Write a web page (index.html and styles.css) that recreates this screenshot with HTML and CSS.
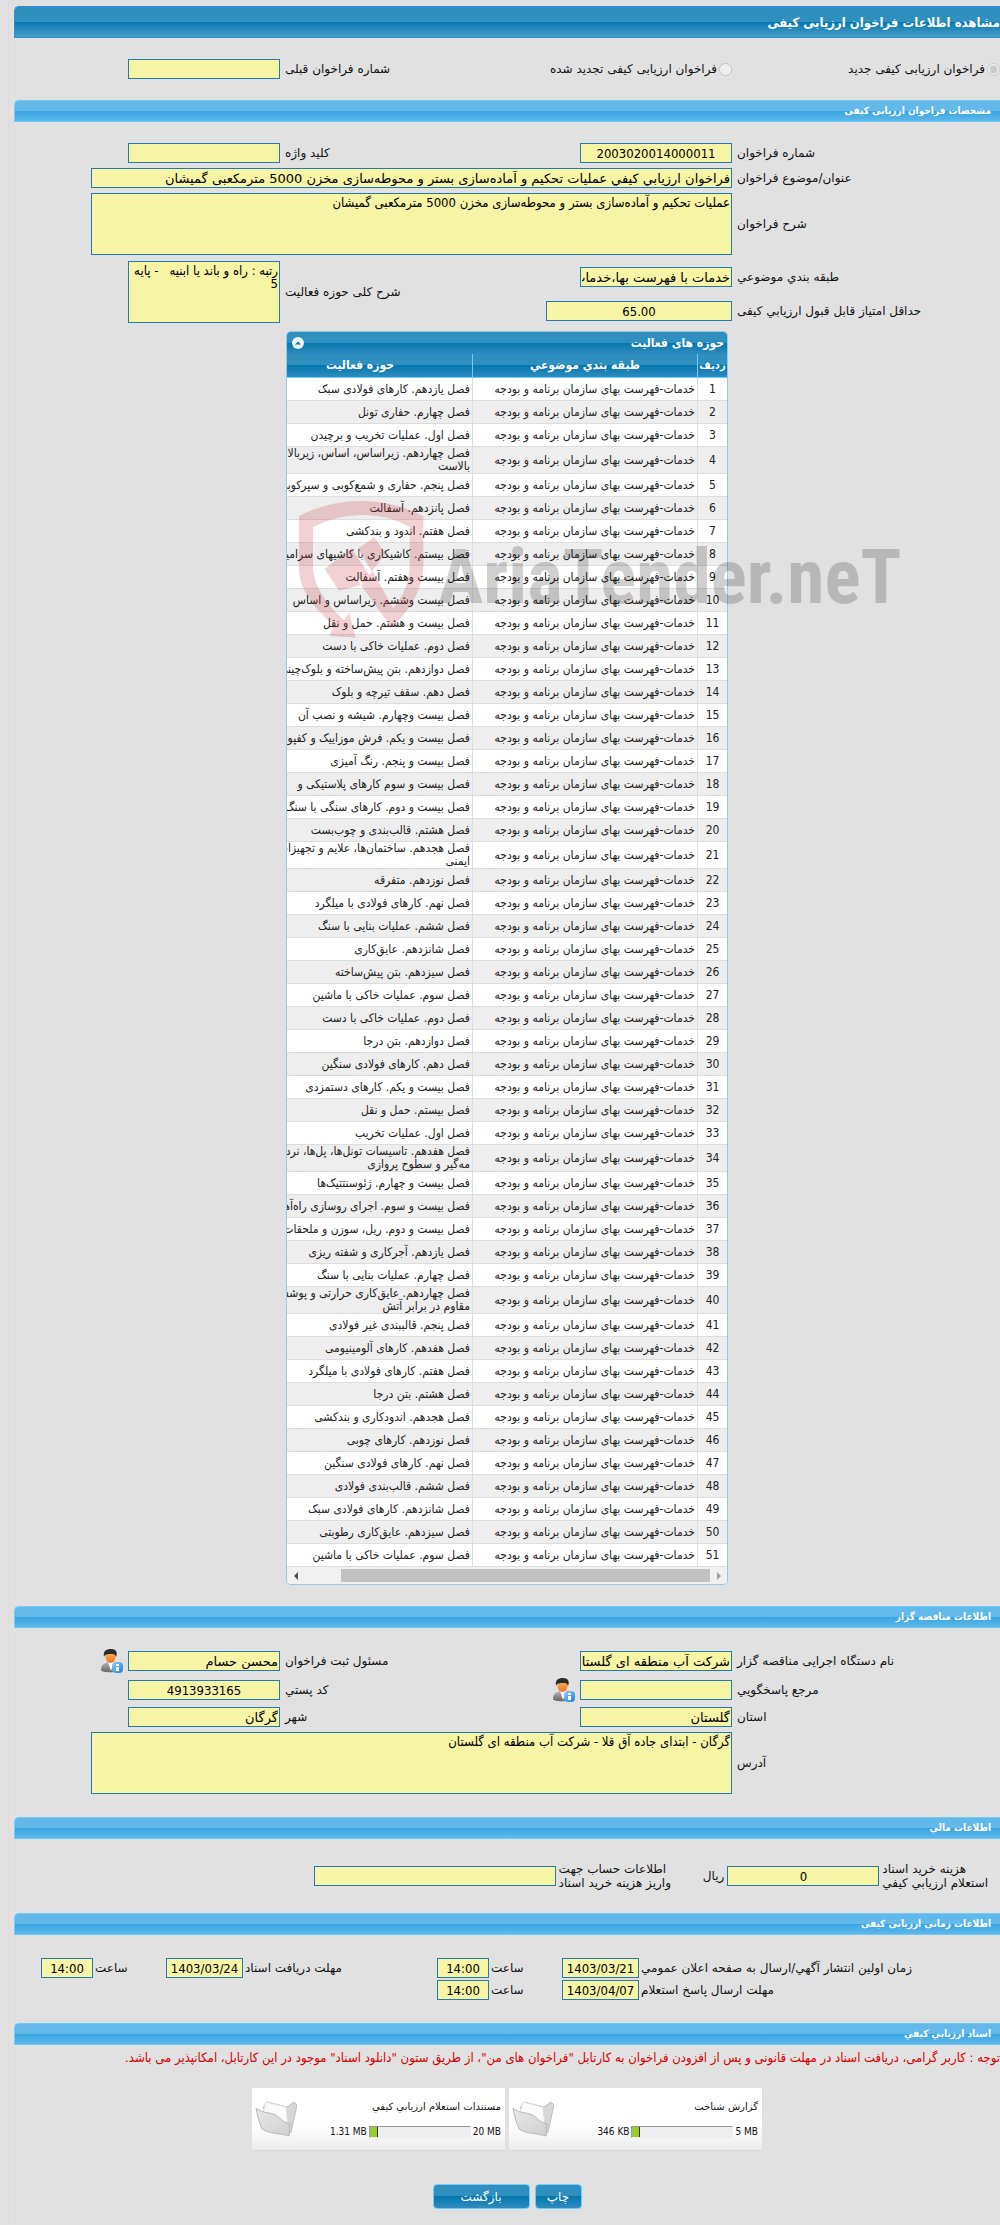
FILE: index.html
```
<!DOCTYPE html>
<html lang="fa" dir="rtl">
<head>
<meta charset="utf-8">
<title>مشاهده اطلاعات فراخوان ارزیابی کیفی</title>
<link rel="stylesheet" href="styles.css">
</head>
<body>
<svg class="defs" aria-hidden="true">
  <defs>
    <linearGradient id="suit" x1="0" y1="0" x2="0" y2="1"><stop offset="0" stop-color="#b5b5b5"/><stop offset="1" stop-color="#666"/></linearGradient>
    <linearGradient id="skin" x1="0" y1="0" x2="0" y2="1"><stop offset="0" stop-color="#ffb765"/><stop offset="1" stop-color="#e8771f"/></linearGradient>
    <linearGradient id="info" x1="0" y1="0" x2="1" y2="1"><stop offset="0" stop-color="#8fd0fa"/><stop offset="1" stop-color="#1c7fd6"/></linearGradient>
    <linearGradient id="flap" x1="0" y1="0" x2="1" y2="1"><stop offset="0" stop-color="#e9e9e9"/><stop offset="1" stop-color="#cfcfcf"/></linearGradient>
    <symbol id="person" viewBox="0 0 22 24">
      <path d="M0 21C0 16 3 14 8 13h3c5 1 7 3 7 8 0 3-18 3-18 0z" fill="url(#suit)"/>
      <path d="M7 13l3 9 3-9z" fill="#fff"/>
      <ellipse cx="9.500" cy="8" rx="5" ry="6" fill="url(#skin)"/>
      <path d="M3 8C2 2 5 0 10 0s7 3 5 8c-1-3-2-3-5-3-3 0-6 0-7 3z" fill="#2b2b2b"/>
      <rect x="11" y="13" width="11" height="11" rx="4" fill="url(#info)"/>
      <path d="M15 15h3v2h-3zM15 18h3v4h-3z" fill="#fff"/>
    </symbol>
    <symbol id="folder" viewBox="0 0 42 38">
      <path d="M8 8l4-6 20 5 7-5 3 3-6 27-6 3z" fill="#d6d6d6" stroke="#bdbdbd"/>
      <path d="M8 12l3-10 20 5 2 20-6 5z" fill="#fbfbfb" stroke="#ddd"/>
      <path d="M1 8c6 5 10 4 17 6 7 2 8 8 17 10l-1 12C24 33 15 34 7 29 4 22 2 14 1 8z" fill="url(#flap)" stroke="#b8b8b8"/>
    </symbol>
  </defs>
</svg>
<main class="panel">
  <h1 class="title">مشاهده اطلاعات فراخوان ارزیابی کیفی</h1>

  <section class="form form-type">
    <label class="choice"><input type="radio" name="kind" checked disabled><span>فراخوان ارزیابی کیفی جدید</span></label>
    <label class="choice"><input type="radio" name="kind" disabled><span>فراخوان ارزیابی کیفی تجدید شده</span></label>
    <label class="lbl" for="prev">شماره فراخوان قبلی</label><input class="field" id="prev" readonly>
  </section>

  <h2 class="bar">مشخصات فراخوان ارزیابی کیفی</h2>
  <section class="form form-call">
    <label class="lbl" for="num">شماره فراخوان</label><input class="field num" id="num" value="2003020014000011" readonly>
    <label class="lbl" for="key">کلید واژه</label><input class="field" id="key" readonly><span></span>
    <label class="lbl" for="subject">عنوان/موضوع فراخوان</label><input class="field wide" id="subject" value="فراخوان ارزیابي کیفي عملیات تحکیم و آماده‌سازی بستر و محوطه‌سازی مخزن 5000 مترمکعبی گمیشان" readonly>
    <label class="lbl" for="desc">شرح فراخوان</label><textarea class="field wide" id="desc" readonly>عملیات تحکیم و آماده‌سازی بستر و محوطه‌سازی مخزن 5000 مترمکعبی گمیشان</textarea>
    <label class="lbl" for="cat">طبقه بندي موضوعي</label><input class="field" id="cat" value="خدمات با فهرست بها،خدمات" readonly>
    <label class="lbl scope-label" for="scope">شرح کلی حوزه فعالیت</label><textarea class="field scope" id="scope" readonly>رتبه : راه و باند یا ابنیه   - پایه 5</textarea>
    <label class="lbl score-label" for="score">حداقل امتیاز قابل قبول ارزیابي کیفی</label><input class="field num score" id="score" value="65.00" readonly>
  </section>

  <section class="grid">
    <header class="grid-title"><span>حوزه های فعالیت</span>
      <button class="fold" type="button" aria-label="بستن"><svg viewBox="0 0 12 12"><circle cx="6" cy="6" r="6" fill="#e9f3f9"/><path d="M3 7.500 6 4.500 9 7.500z" fill="#1b6f9f"/></svg></button>
    </header>
    <div class="grid-view">
      <table class="rows">
        <colgroup><col class="c-no"><col class="c-cat"><col class="c-act"></colgroup>
        <thead><tr><th>ردیف</th><th>طبقه بندي موضوعي</th><th>حوزه فعالیت</th></tr></thead>
        <tbody>
<tr><td>1</td><td>خدمات-فهرست بهای سازمان برنامه و بودجه</td><td>فصل یازدهم. کارهای فولادی سبک</td></tr>
<tr><td>2</td><td>خدمات-فهرست بهای سازمان برنامه و بودجه</td><td>فصل چهارم. حفاری تونل</td></tr>
<tr><td>3</td><td>خدمات-فهرست بهای سازمان برنامه و بودجه</td><td>فصل اول. عملیات تخریب و برچیدن</td></tr>
<tr class="two"><td>4</td><td>خدمات-فهرست بهای سازمان برنامه و بودجه</td><td>فصل چهاردهم. زیراساس، اساس، زیربالاست و<br>بالاست</td></tr>
<tr><td>5</td><td>خدمات-فهرست بهای سازمان برنامه و بودجه</td><td>فصل پنجم. حفاری و شمع‌کوبی و سپرکوبی</td></tr>
<tr><td>6</td><td>خدمات-فهرست بهای سازمان برنامه و بودجه</td><td>فصل پانزدهم. آسفالت</td></tr>
<tr><td>7</td><td>خدمات-فهرست بهای سازمان برنامه و بودجه</td><td>فصل هفتم. اندود و بندکشی</td></tr>
<tr><td>8</td><td>خدمات-فهرست بهای سازمان برنامه و بودجه</td><td>فصل بیستم. کاشیکاری با کاشیهای سرامیکی</td></tr>
<tr><td>9</td><td>خدمات-فهرست بهای سازمان برنامه و بودجه</td><td>فصل بیست وهفتم. آسفالت</td></tr>
<tr><td>10</td><td>خدمات-فهرست بهای سازمان برنامه و بودجه</td><td>فصل بیست وششم. زیراساس و اساس</td></tr>
<tr><td>11</td><td>خدمات-فهرست بهای سازمان برنامه و بودجه</td><td>فصل بیست و هشتم. حمل و نقل</td></tr>
<tr><td>12</td><td>خدمات-فهرست بهای سازمان برنامه و بودجه</td><td>فصل دوم. عملیات خاکی با دست</td></tr>
<tr><td>13</td><td>خدمات-فهرست بهای سازمان برنامه و بودجه</td><td>فصل دوازدهم. بتن پیش‌ساخته و بلوک‌چینی</td></tr>
<tr><td>14</td><td>خدمات-فهرست بهای سازمان برنامه و بودجه</td><td>فصل دهم. سقف تیرچه و بلوک</td></tr>
<tr><td>15</td><td>خدمات-فهرست بهای سازمان برنامه و بودجه</td><td>فصل بیست وچهارم. شیشه و نصب آن</td></tr>
<tr><td>16</td><td>خدمات-فهرست بهای سازمان برنامه و بودجه</td><td>فصل بیست و یکم. فرش موزاییک و کفپوش</td></tr>
<tr><td>17</td><td>خدمات-فهرست بهای سازمان برنامه و بودجه</td><td>فصل بیست و پنجم. رنگ آمیزی</td></tr>
<tr><td>18</td><td>خدمات-فهرست بهای سازمان برنامه و بودجه</td><td>فصل بیست و سوم کارهای پلاستیکی و</td></tr>
<tr><td>19</td><td>خدمات-فهرست بهای سازمان برنامه و بودجه</td><td>فصل بیست و دوم. کارهای سنگی با سنگ</td></tr>
<tr><td>20</td><td>خدمات-فهرست بهای سازمان برنامه و بودجه</td><td>فصل هشتم. قالب‌بندی و چوب‌بست</td></tr>
<tr class="two"><td>21</td><td>خدمات-فهرست بهای سازمان برنامه و بودجه</td><td>فصل هجدهم. ساختمان‌ها، علایم و تجهیزات<br>ایمنی</td></tr>
<tr><td>22</td><td>خدمات-فهرست بهای سازمان برنامه و بودجه</td><td>فصل نوزدهم. متفرقه</td></tr>
<tr><td>23</td><td>خدمات-فهرست بهای سازمان برنامه و بودجه</td><td>فصل نهم. کارهای فولادی با میلگرد</td></tr>
<tr><td>24</td><td>خدمات-فهرست بهای سازمان برنامه و بودجه</td><td>فصل ششم. عملیات بنایی با سنگ</td></tr>
<tr><td>25</td><td>خدمات-فهرست بهای سازمان برنامه و بودجه</td><td>فصل شانزدهم. عایق‌کاری</td></tr>
<tr><td>26</td><td>خدمات-فهرست بهای سازمان برنامه و بودجه</td><td>فصل سیزدهم. بتن پیش‌ساخته</td></tr>
<tr><td>27</td><td>خدمات-فهرست بهای سازمان برنامه و بودجه</td><td>فصل سوم. عملیات خاکی با ماشین</td></tr>
<tr><td>28</td><td>خدمات-فهرست بهای سازمان برنامه و بودجه</td><td>فصل دوم. عملیات خاکی با دست</td></tr>
<tr><td>29</td><td>خدمات-فهرست بهای سازمان برنامه و بودجه</td><td>فصل دوازدهم. بتن درجا</td></tr>
<tr><td>30</td><td>خدمات-فهرست بهای سازمان برنامه و بودجه</td><td>فصل دهم. کارهای فولادی سنگین</td></tr>
<tr><td>31</td><td>خدمات-فهرست بهای سازمان برنامه و بودجه</td><td>فصل بیست و یکم. کارهای دستمزدی</td></tr>
<tr><td>32</td><td>خدمات-فهرست بهای سازمان برنامه و بودجه</td><td>فصل بیستم. حمل و نقل</td></tr>
<tr><td>33</td><td>خدمات-فهرست بهای سازمان برنامه و بودجه</td><td>فصل اول. عملیات تخریب</td></tr>
<tr class="two"><td>34</td><td>خدمات-فهرست بهای سازمان برنامه و بودجه</td><td>فصل هفدهم. تاسیسات تونل‌ها، پل‌ها، نرده،<br>مه‌گیر و سطوح پروازی</td></tr>
<tr><td>35</td><td>خدمات-فهرست بهای سازمان برنامه و بودجه</td><td>فصل بیست و چهارم. ژئوسنتتیک‌ها</td></tr>
<tr><td>36</td><td>خدمات-فهرست بهای سازمان برنامه و بودجه</td><td>فصل بیست و سوم. اجرای روسازی راه‌آهن</td></tr>
<tr><td>37</td><td>خدمات-فهرست بهای سازمان برنامه و بودجه</td><td>فصل بیست و دوم. ریل، سوزن و ملحقات</td></tr>
<tr><td>38</td><td>خدمات-فهرست بهای سازمان برنامه و بودجه</td><td>فصل یازدهم. آجرکاری و شفته ریزی</td></tr>
<tr><td>39</td><td>خدمات-فهرست بهای سازمان برنامه و بودجه</td><td>فصل چهارم. عملیات بنایی با سنگ</td></tr>
<tr class="two"><td>40</td><td>خدمات-فهرست بهای سازمان برنامه و بودجه</td><td>فصل چهاردهم. عایق‌کاری حرارتی و پوشش<br>مقاوم در برابر آتش</td></tr>
<tr><td>41</td><td>خدمات-فهرست بهای سازمان برنامه و بودجه</td><td>فصل پنجم. قالببندی غیر فولادی</td></tr>
<tr><td>42</td><td>خدمات-فهرست بهای سازمان برنامه و بودجه</td><td>فصل هفدهم. کارهای آلومینیومی</td></tr>
<tr><td>43</td><td>خدمات-فهرست بهای سازمان برنامه و بودجه</td><td>فصل هفتم. کارهای فولادی با میلگرد</td></tr>
<tr><td>44</td><td>خدمات-فهرست بهای سازمان برنامه و بودجه</td><td>فصل هشتم. بتن درجا</td></tr>
<tr><td>45</td><td>خدمات-فهرست بهای سازمان برنامه و بودجه</td><td>فصل هجدهم. اندودکاری و بندکشی</td></tr>
<tr><td>46</td><td>خدمات-فهرست بهای سازمان برنامه و بودجه</td><td>فصل نوزدهم. کارهای چوبی</td></tr>
<tr><td>47</td><td>خدمات-فهرست بهای سازمان برنامه و بودجه</td><td>فصل نهم. کارهای فولادی سنگین</td></tr>
<tr><td>48</td><td>خدمات-فهرست بهای سازمان برنامه و بودجه</td><td>فصل ششم. قالب‌بندی فولادی</td></tr>
<tr><td>49</td><td>خدمات-فهرست بهای سازمان برنامه و بودجه</td><td>فصل شانزدهم. کارهای فولادی سبک</td></tr>
<tr><td>50</td><td>خدمات-فهرست بهای سازمان برنامه و بودجه</td><td>فصل سیزدهم. عایق‌کاری رطوبتی</td></tr>
<tr><td>51</td><td>خدمات-فهرست بهای سازمان برنامه و بودجه</td><td>فصل سوم. عملیات خاکی با ماشین</td></tr>
        </tbody>
      </table>
    </div>
    <div class="scroll"><span class="arrow next"></span><span class="track"><span class="thumb"></span></span><span class="arrow prev"></span></div>
    <svg class="mark" viewBox="0 0 1845 465" aria-hidden="true">
      <g fill="#c4323c" opacity=".22">
        <path fill-rule="evenodd" d="M30 75Q118 30 216 30T403 75V225Q402 318 308 410L197 256 224 280 150 299 107 234 187 172 203 176 256 138 290 190 250 238 312 352Q358 300 362 228V108Q296 70 216 72T72 108V235Q80 312 165 388L180 365 200 440 122 435 135 402Q36 322 30 240z"/>
        <path d="M188 172 240 252 250 244 202 164z" fill="#fff"/>
      </g>
      <text x="448" y="336" fill="#000" opacity=".18">AriaTender.neT</text>
    </svg>
  </section>

  <h2 class="bar">اطلاعات مناقصه گزار</h2>
  <section class="form form-org">
    <label class="lbl" for="org">نام دستگاه اجرایی مناقصه گزار</label><input class="field" id="org" value="شرکت آب منطقه ای گلستان" readonly>
    <label class="lbl" for="resp">مسئول ثبت فراخوان</label><input class="field" id="resp" value="محسن حسام" readonly>
    <button class="who" type="button" aria-label="اطلاعات"><svg><use href="#person"/></svg></button>
    <label class="lbl" for="ref">مرجع پاسخگويي</label><input class="field" id="ref" readonly>
    <div class="pair"><button class="who" type="button" aria-label="اطلاعات"><svg><use href="#person"/></svg></button><label class="lbl" for="zip">کد پستي</label></div><input class="field num" id="zip" value="4913933165" readonly><span></span>
    <label class="lbl" for="prov">استان</label><input class="field" id="prov" value="گلستان" readonly>
    <label class="lbl" for="city">شهر</label><input class="field" id="city" value="گرگان" readonly><span></span>
    <label class="lbl" for="addr">آدرس</label><textarea class="field wide" id="addr" readonly>گرگان - ابتدای جاده آق قلا - شرکت آب منطقه ای گلستان</textarea>
  </section>

  <h2 class="bar">اطلاعات مالي</h2>
  <section class="money">
    <label class="lbl two-line" for="fee">هزینه خرید اسناد<br>استعلام ارزیابي کیفي</label><input class="field num" id="fee" value="0" readonly><span>ریال</span>
    <label class="lbl two-line" for="acct">اطلاعات حساب جهت<br>واریز هزینه خرید اسناد</label><input class="field" id="acct" readonly>
  </section>

  <h2 class="bar">اطلاعات زمانی ارزیابی کیفی</h2>
  <section class="times">
    <label class="lbl" for="d1">زمان اولین انتشار آگهي/ارسال به صفحه اعلان عمومي</label><input class="field num" id="d1" value="1403/03/21" readonly>
    <label class="lbl" for="t1">ساعت</label><input class="field num" id="t1" value="14:00" readonly>
    <label class="lbl" for="d2">مهلت دریافت اسناد</label><input class="field num" id="d2" value="1403/03/24" readonly>
    <label class="lbl" for="t2">ساعت</label><input class="field num" id="t2" value="14:00" readonly><span></span>
    <label class="lbl" for="d3">مهلت ارسال پاسخ استعلام</label><input class="field num" id="d3" value="1403/04/07" readonly>
    <label class="lbl" for="t3">ساعت</label><input class="field num" id="t3" value="14:00" readonly>
  </section>

  <h2 class="bar">اسناد ارزیابي کیفي</h2>
  <p class="note">توجه : کاربر گرامی، دریافت اسناد در مهلت قانونی و پس از افزودن فراخوان به کارتابل "فراخوان های من"، از طریق ستون "دانلود اسناد" موجود در این کارتابل، امکانپذیر می باشد.</p>

  <section class="files">
    <article class="file">
      <div class="info"><h3>گزارش شناخت</h3><div class="size"><span>5 MB</span><div class="meter"><i></i></div><span>346 KB</span></div></div>
      <svg class="dir"><use href="#folder"/></svg>
    </article>
    <article class="file">
      <div class="info"><h3>مستندات استعلام ارزیابي کیفي</h3><div class="size"><span>20 MB</span><div class="meter"><i></i></div><span>1.31 MB</span></div></div>
      <svg class="dir"><use href="#folder"/></svg>
    </article>
  </section>

  <div class="actions"><button class="btn" type="button">چاپ</button><button class="btn back" type="button">بازگشت</button></div>
</main>
</body>
</html>
```
FILE: styles.css
```
* { box-sizing: border-box; }
body {
  margin: 0;
  padding-left: 8px;
  background: #e1e1e1;
  color: #111;
  font: 12px/14px "DejaVu Sans", sans-serif;
  overflow-x: hidden;
}
.defs { position: absolute; width: 0; height: 0; }
.panel { border-left: 1px solid #dcdcdc; padding: 6px 0 15px 5px; }

.title, .bar {
  margin: 0;
  color: #fff;
  font-family: "DejaVu Sans Condensed", "DejaVu Sans", sans-serif;
  font-weight: bold;
  border: 1px solid #2a8fdc;
  border-right: 0;
  border-radius: 5px 0 0 0;
}
.title {
  height: 32px;
  line-height: 32px;
  font-size: 13px;
  background: linear-gradient(#2f90bf 0, #2f90bf 50%, #0477ae 50%, #4a9fc8 100%);
}
.bar {
  height: 22px;
  line-height: 20px;
  font-size: 10px;
  padding-right: 9px;
  border-color: #6fcdf5;
  background: linear-gradient(#63b9e9 0, #63b9e9 50%, #38a5e0 50%, #5db8ea 100%);
}

.field {
  width: 100%;
  height: 20px;
  padding: 0 1px;
  border: 1px solid #2878b0;
  border-radius: 0;
  background: #f6f4a5;
  color: #000;
  font: 13px/16px "DejaVu Sans", sans-serif;
  outline: 0;
}
textarea.field {
  display: block;
  height: 62px;
  padding: 2px 1px;
  font-family: "DejaVu Sans Condensed", "DejaVu Sans", sans-serif;
  line-height: 13px;
  resize: none;
  overflow: hidden;
}
.num { text-align: center; font-family: "DejaVu Sans Condensed", "DejaVu Sans", sans-serif; }
.lbl { text-align: left; white-space: nowrap; }

.form {
  display: grid;
  grid-template-columns: 263fr 152px 290fr 152px 109fr;
  gap: 5px;
  align-items: center;
  padding: 21px 0 0;
}
.form-type { padding-bottom: 21px; }
.choice { display: flex; align-items: center; gap: 2px; white-space: nowrap; }
.choice input { width: 13px; height: 13px; margin: 0; }
.form-type { grid-template-columns: 263fr 168px 274fr 152px 109fr; }
.wide { grid-column: 2 / -1; width: calc(100% - 77px); }
.form-call { grid-template-rows: 20px 20px 62px 34px 24px; }
.scope-label { grid-column: 3; grid-row: 4 / 6; }
.scope { grid-column: 4; grid-row: 4 / 6; }
.score-label { grid-column: 1; grid-row: 5; }
.score { grid-column: 2 / 4; grid-row: 5; width: 186px; }

.grid {
  position: relative;
  width: 442px;
  margin: 8px auto 21px;
  border: 1px solid #9cc7e4;
  border-radius: 5px;
}
.grid-title {
  display: flex;
  justify-content: space-between;
  align-items: center;
  height: 22px;
  padding: 0 3px 0 5px;
  border-radius: 4px 4px 0 0;
  background: linear-gradient(#2f90bf 0, #2f90bf 50%, #0477ae 50%, #2f8cc0 100%);
  color: #fff;
  font-family: "DejaVu Sans Condensed", "DejaVu Sans", sans-serif;
  font-weight: bold;
}
.fold { width: 12px; height: 12px; padding: 0; border: 0; background: none; }
.fold svg { display: block; width: 12px; height: 12px; }
.grid-view { overflow: hidden; }
.rows {
  width: 480px;
  table-layout: fixed;
  border-collapse: separate;
  border-spacing: 0;
  color: #222;
  font-family: "DejaVu Sans Condensed", "DejaVu Sans", sans-serif;
  font-size: 12px;
  line-height: 13px;
  white-space: nowrap;
}
.c-no { width: 30px; }
.c-cat { width: 225px; }
.rows th {
  height: 24px;
  padding: 0;
  border-left: 1px solid #6fcdf5;
  border-bottom: 1px solid #6fcdf5;
  background: linear-gradient(#2f90bf 0, #2f90bf 50%, #0477ae 50%, #2f8cc0 100%);
  color: #fff;
}
.rows th:first-child { font-size: 11px; }
.rows td {
  height: 23px;
  padding: 0 2px;
  border-left: 1px solid #ddd;
  border-bottom: 1px solid #ddd;
  background: #fff;
}
.rows tr:nth-child(even) td { background: #eee; }
.rows tr.two td { height: 27px; }
.rows td:first-child { text-align: center; }
.scroll {
  display: flex;
  align-items: center;
  height: 17px;
  background: #f1f1f1;
  border-radius: 0 0 4px 4px;
}
.track { flex: 1; height: 13px; }
.thumb { display: block; width: 91%; height: 13px; background: #c1c1c1; }
.arrow { width: 17px; display: flex; justify-content: center; }
.arrow::before { content: ""; border: 4px solid transparent; }
.next::before { border-left-color: #a3a3a3; border-right-width: 0; }
.prev::before { border-right-color: #505050; border-left-width: 0; }
.mark {
  position: absolute;
  left: 2px;
  top: 159px;
  width: 615px;
  height: 155px;
  pointer-events: none;
  direction: ltr;
}
.mark text { font: bold 226px "Liberation Sans Narrow", "Roboto Condensed", "Open Sans Condensed", "Roboto", sans-serif; }

.form-org { grid-template-rows: 24px 24px 20px auto; margin-bottom: 23px; }
.pair { display: flex; justify-content: space-between; align-items: center; }
.who { width: 22px; height: 24px; padding: 0; border: 0; background: none; }
.who svg { display: block; width: 22px; height: 24px; }

.money {
  display: grid;
  grid-template-columns: 119fr 152px 51fr 110fr 242px 300fr;
  gap: 3px;
  align-items: center;
  padding: 23px 0;
}
.two-line { justify-self: end; text-align: right; }
.times {
  display: grid;
  grid-template-columns: 359fr 77px 69fr 52px 190fr 77px 69fr 52px 25fr;
  gap: 2px;
  align-items: center;
  padding: 23px 0;
}
.two-line { text-align: left; }
.note {
  margin: 6px 0 0;
  color: #d80000;
  font-family: "DejaVu Sans Condensed", "DejaVu Sans", sans-serif;
  font-size: 13px;
  white-space: nowrap;
}

.files { display: flex; justify-content: center; gap: 4px; margin-top: 23px; }
.file {
  display: flex;
  justify-content: space-between;
  align-items: center;
  width: 253px;
  height: 63px;
  padding: 0 4px 0 3px;
  border-bottom: 1px solid #d8d8d8;
  background: linear-gradient(#fff 60%, #ececec);
}
.info { display: flex; flex-direction: column; gap: 11px; }
.file h3 { margin: 0; font-size: 10px; font-weight: normal; }
.size {
  display: flex;
  align-items: center;
  gap: 2px;
  font-family: "DejaVu Sans Condensed", "DejaVu Sans", sans-serif;
  font-size: 10px;
}
.size span { direction: ltr; }
.meter {
  display: flex;
  justify-content: flex-end;
  width: 102px;
  height: 12px;
  background: #eee;
  border: 1px solid #999;
  border-right-color: #eee;
  border-bottom-color: #eee;
}
.meter i { width: 8px; background: #9c3; border-right: 1px solid #333; }
.dir { width: 42px; height: 38px; }

.actions { display: flex; justify-content: center; gap: 5px; margin-top: 33px; }
.btn {
  height: 25px;
  width: 47px;
  padding: 0;
  border: 1px solid #6fcdf5;
  border-radius: 4px;
  background: linear-gradient(#2f90bf 0, #2f90bf 50%, #0477ae 50%, #2f8cc0 100%);
  color: #fff;
  font: inherit;
}
.back { width: 97px; }
```
